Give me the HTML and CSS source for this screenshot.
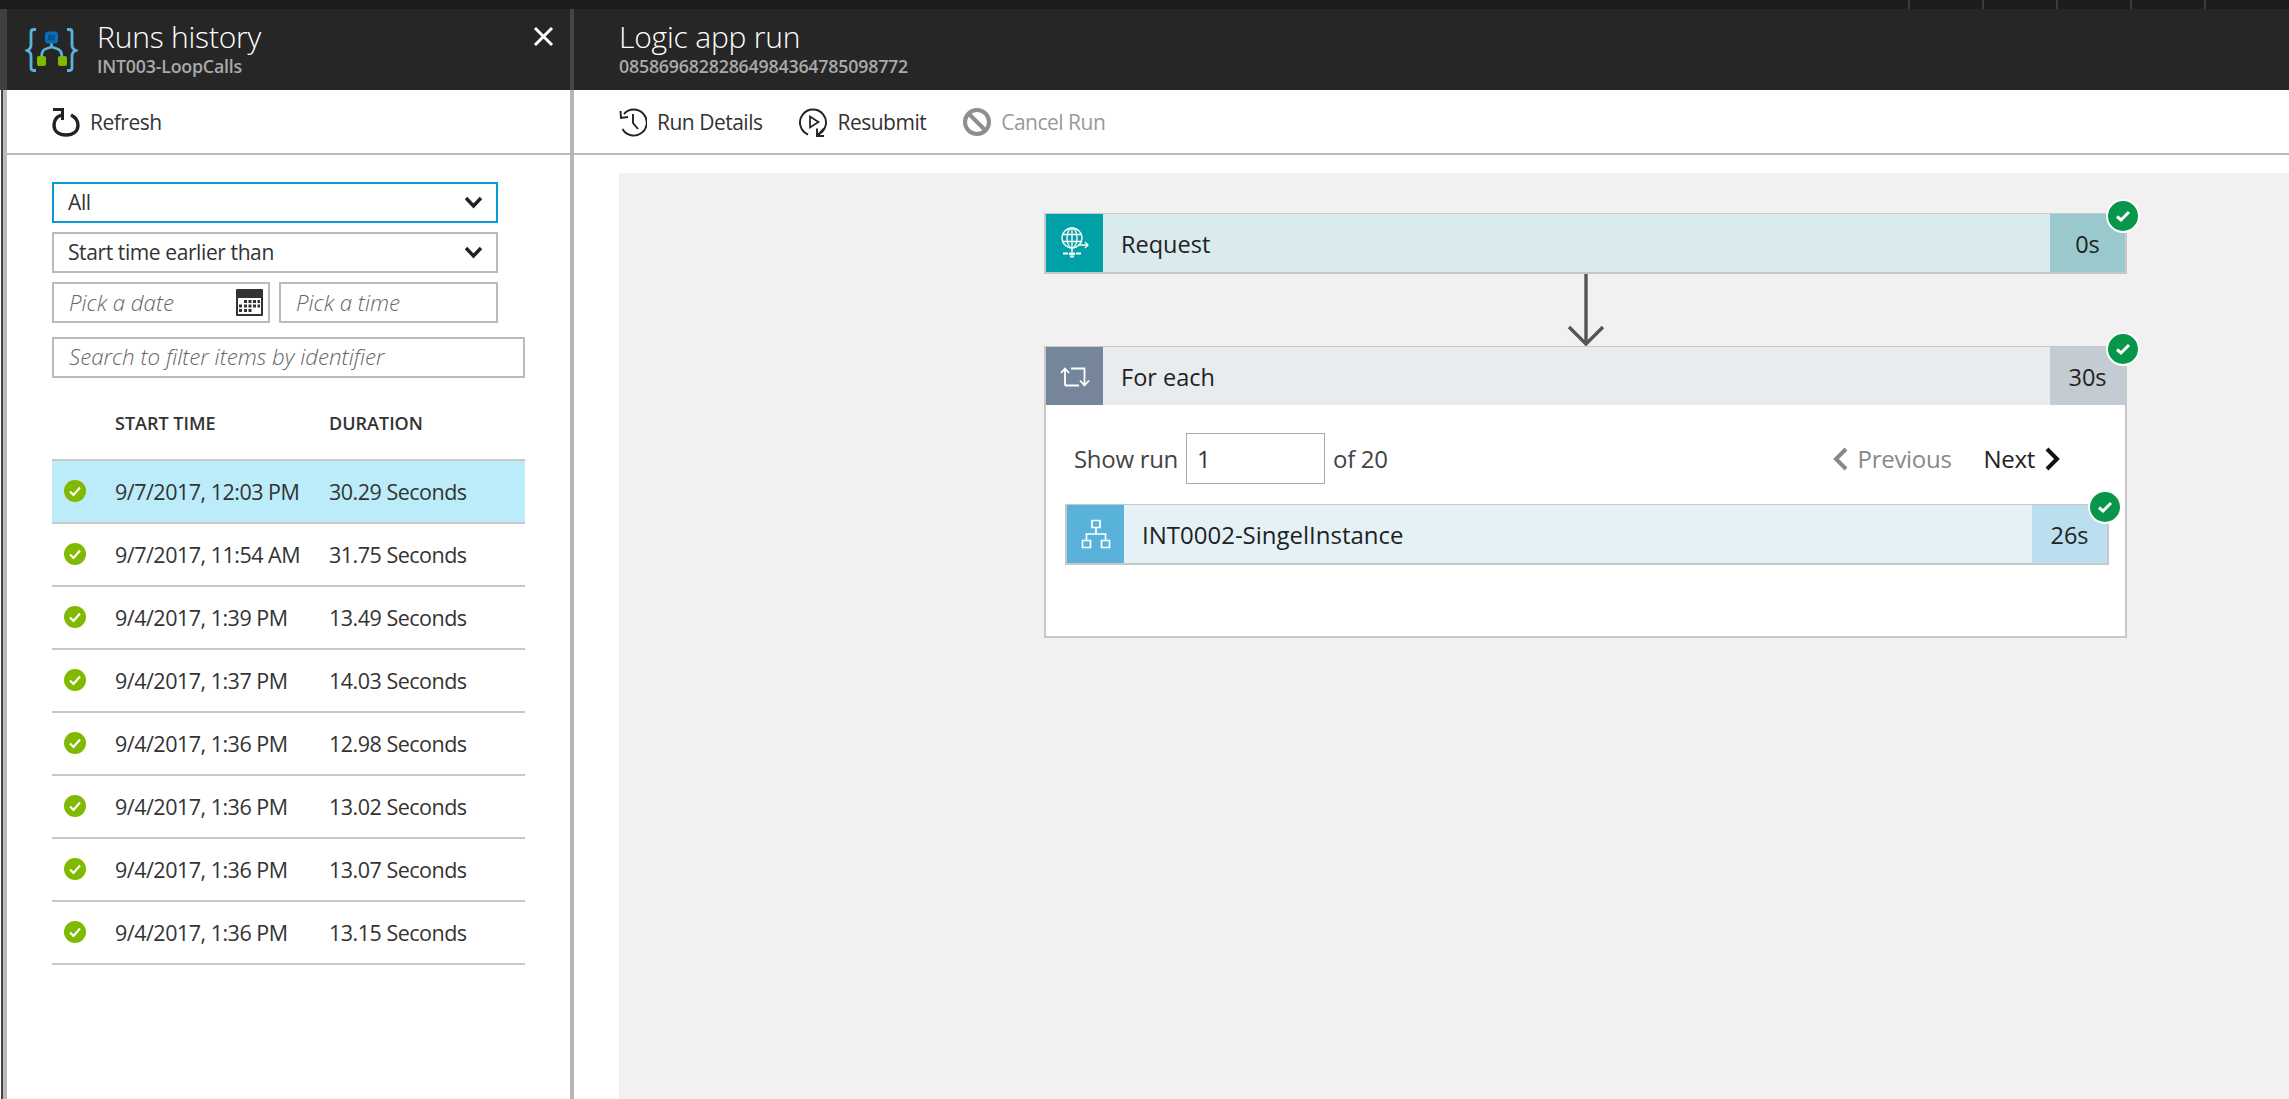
FILE: index.html
```html
<!DOCTYPE html>
<html lang="en">
<head>
    <meta charset="UTF-8">
    <title>Logic app run</title>
    <link rel="stylesheet" href="styles.css">
</head>
<body>

    <div class="topbar">
        <span class="topbar-tab"></span>
        <span class="topbar-tab"></span>
        <span class="topbar-tab"></span>
        <span class="topbar-tab"></span>
        <span class="topbar-tab"></span>
    </div>

    <div class="main">
        <div class="edge"></div>

        <!-- Runs history blade -->
        <section class="blade blade-left">
            <header class="blade-header">
                <svg class="logo" width="53" height="44" viewBox="0 0 53 44">
                    <path d="M11 1.500H8.500C6.500 1.500 6 2.500 6 4.500V17C6 19.500 5 21.500 2 22.500C5 23.500 6 25.500 6 28V39.500C6 41.500 6.500 42.500 8.500 42.500H11" fill="none" stroke="#59b4d9" stroke-width="2.800"/>
                    <path d="M42 1.500H44.500C46.500 1.500 47 2.500 47 4.500V17C47 19.500 48 21.500 51 22.500C48 23.500 47 25.500 47 28V39.500C47 41.500 46.500 42.500 44.500 42.500H42" fill="none" stroke="#59b4d9" stroke-width="2.800"/>
                    <path d="M26.500 13V19M26.500 19C22 20.500 16.500 20 16.500 29M26.500 19C31 20.500 37 20 37 29" fill="none" stroke="#59b4d9" stroke-width="2.600"/>
                    <rect x="21.500" y="5" width="10" height="9" rx="2" fill="#12507f" stroke="#0072c6" stroke-width="3"/>
                    <rect x="12" y="28" width="9" height="10" rx="2" fill="#7fba00"/>
                    <rect x="33" y="28" width="9" height="10" rx="2" fill="#7fba00"/>
                </svg>
                <div class="blade-title">
                    <h1>Runs history</h1>
                    <p>INT003-LoopCalls</p>
                </div>
                <svg class="close" width="21" height="21" viewBox="0 0 21 21">
                    <path d="M2 2L19 19M19 2L2 19" stroke="#fff" stroke-width="3"/>
                </svg>
            </header>
            <div class="commands commands-left">
                <button class="command">
                    <svg width="28" height="30" viewBox="0 0 28 30">
                        <path d="M9 8C4.500 10 2 13.500 2 18C2 24.500 7 28 14 28C21 28 26 24.500 26 18C26 13.500 23 10 19 8" fill="none" stroke="#222" stroke-width="3.400"/>
                        <path d="M1 1H12V13L9 13V4H1Z" fill="#222"/>
                    </svg>
                    Refresh
                </button>
            </div>

            <div class="filters">
                <div class="field field-focus">All <svg class="chev" width="19" height="13" viewBox="0 0 19 13"><path d="M2 2L9.500 10L17 2" fill="none" stroke="#222" stroke-width="3.400"/></svg></div>
                <div class="field">Start time earlier than <svg class="chev" width="19" height="13" viewBox="0 0 19 13"><path d="M2 2L9.500 10L17 2" fill="none" stroke="#222" stroke-width="3.400"/></svg></div>
                <div class="field-pair">
                    <div class="field field-date placeholder">Pick a date
                        <svg class="calendar" width="27" height="27" viewBox="0 0 27 27">
                            <rect width="27" height="27" rx="1" fill="#333"/>
                            <rect x="2" y="9" width="23" height="16" fill="#fff"/>
                            <path d="M8 11h3v3H8zM12.500 11h3v3h-3zM17 11h3v3h-3zM21.500 11h2.500v3h-2.500zM3 15.500h3v3H3zM8 15.500h3v3H8zM12.500 15.500h3v3h-3zM17 15.500h3v3h-3zM21.500 15.500h2.500v3h-2.500zM3 20h3v3H3zM8 20h3v3H8zM12.500 20h3v3h-3z" fill="#333"/>
                        </svg>
                    </div>
                    <div class="field field-time placeholder">Pick a time</div>
                </div>
                <div class="field field-search placeholder">Search to filter items by identifier</div>
            </div>

            <table class="runs">
                <thead>
                    <tr>
                        <th class="col-status"></th>
                        <th class="col-time">START TIME</th>
                        <th>DURATION</th>
                    </tr>
                </thead>
                <tbody id="runRows"></tbody>
            </table>
        </section>

        <div class="divider"></div>

        <!-- Logic app run blade -->
        <section class="blade blade-right">
            <header class="blade-header">
                <div class="blade-title">
                    <h1>Logic app run</h1>
                    <p>08586968282864984364785098772</p>
                </div>
            </header>
            <div class="commands">
                <button class="command">
                    <svg width="28" height="30" viewBox="0 0 28 30">
                        <path d="M5 7A13 13 0 1 1 3.500 22" fill="none" stroke="#222" stroke-width="1.900"/>
                        <path d="M1.500 4L2 11L9 10" fill="none" stroke="#222" stroke-width="1.900"/>
                        <path d="M14 7V16L19 22" fill="none" stroke="#222" stroke-width="1.900"/>
                    </svg>
                    Run Details
                </button>
                <button class="command">
                    <svg width="28" height="30" viewBox="0 0 28 30">
                        <path d="M9 27.500A13 13 0 1 1 19 27.500" fill="none" stroke="#222" stroke-width="1.900"/>
                        <path d="M11 9.500L19.500 15L11 20.500Z" fill="none" stroke="#222" stroke-width="1.700"/>
                        <path d="M25 21.500L18 29M18 21.500V29H25" fill="none" stroke="#222" stroke-width="1.900"/>
                    </svg>
                    Resubmit
                </button>
                <button class="command command-disabled">
                    <svg width="28" height="30" viewBox="0 0 28 30">
                        <circle cx="14" cy="15" r="12" fill="none" stroke="#8e8e8e" stroke-width="4"/>
                        <path d="M5.500 6.500L22.500 23.500" stroke="#8e8e8e" stroke-width="4"/>
                    </svg>
                    Cancel Run
                </button>
            </div>

            <div class="canvas">
                <div class="card card-request">
                    <div class="card-row">
                        <div class="card-icon">
                            <svg width="30" height="32" viewBox="0 0 30 32">
                                <g fill="none" stroke="#fff" stroke-width="1.300">
                                    <circle cx="12" cy="11" r="10"/>
                                    <ellipse cx="12" cy="11" rx="5" ry="10"/>
                                    <path d="M2.500 7.500H21.500M2.500 14.500H21.500M12 1V21"/>
                                    <path d="M18 18H28M25 15L28 18L25 21"/>
                                    <path d="M12 21V26"/>
                                </g>
                                <path d="M3 25.500h5v2H3zM9 25.500h6v2.500H9zM16 25.500h5v2h-5zM10 28.500h4v2h-4z" fill="#fff"/>
                            </svg>
                        </div>
                        <div class="card-name">Request</div>
                        <div class="card-time">0s</div>
                    </div>
                    <span class="badge"><svg width="16" height="14" viewBox="0 0 16 14"><path d="M2 7.500L6 11L14 3" fill="none" stroke="#fff" stroke-width="3"/></svg></span>
                </div>

                <svg class="arrow" width="40" height="72" viewBox="0 0 40 72">
                    <path d="M20 0V69M3 53L20 70L37 53" fill="none" stroke="#555" stroke-width="3.400"/>
                </svg>

                <div class="card card-loop">
                    <div class="card-row">
                        <div class="card-icon">
                            <svg width="30" height="22" viewBox="0 0 30 22">
                                <path d="M5 20.500V4M1 8L5 3.500L9 8M11 3.500H24.500V20M5 20.500H19M20 15.500L24.500 20.500L29 15.500" fill="none" stroke="#fff" stroke-width="1.800"/>
                            </svg>
                        </div>
                        <div class="card-name">For each</div>
                        <div class="card-time">30s</div>
                    </div>
                    <span class="badge"><svg width="16" height="14" viewBox="0 0 16 14"><path d="M2 7.500L6 11L14 3" fill="none" stroke="#fff" stroke-width="3"/></svg></span>
                    <div class="loop-body">
                        <div class="pager">
                            <span>Show run</span>
                            <span class="pager-input">1</span>
                            <span>of 20</span>
                            <span class="pager-nav pager-prev">
                                <svg width="16" height="24" viewBox="0 0 16 24"><path d="M13 2L3 12L13 22" fill="none" stroke="#888" stroke-width="4"/></svg>
                                Previous
                            </span>
                            <span class="pager-nav pager-next">
                                Next
                                <svg width="16" height="24" viewBox="0 0 16 24"><path d="M3 2L13 12L3 22" fill="none" stroke="#111" stroke-width="4"/></svg>
                            </span>
                        </div>
                        <div class="card card-workflow">
                            <div class="card-row">
                                <div class="card-icon">
                                    <svg width="30" height="30" viewBox="0 0 30 30">
                                        <path d="M11 1.500h8v7h-8zM1.500 21.500h8v7h-8zM20.500 21.500h8v7h-8zM15 8.500V15M5.500 21.500V15H24.500V21.500" fill="none" stroke="#fff" stroke-width="1.700"/>
                                    </svg>
                                </div>
                                <div class="card-name">INT0002-SingelInstance</div>
                                <div class="card-time">26s</div>
                            </div>
                            <span class="badge"><svg width="16" height="14" viewBox="0 0 16 14"><path d="M2 7.500L6 11L14 3" fill="none" stroke="#fff" stroke-width="3"/></svg></span>
                        </div>
                    </div>
                </div>
            </div>
        </section>
    </div>

    <script>
        const runs = [
            ['9/7/2017, 12:03 PM', '30.29 Seconds'],
            ['9/7/2017, 11:54 AM', '31.75 Seconds'],
            ['9/4/2017, 1:39 PM', '13.49 Seconds'],
            ['9/4/2017, 1:37 PM', '14.03 Seconds'],
            ['9/4/2017, 1:36 PM', '12.98 Seconds'],
            ['9/4/2017, 1:36 PM', '13.02 Seconds'],
            ['9/4/2017, 1:36 PM', '13.07 Seconds'],
            ['9/4/2017, 1:36 PM', '13.15 Seconds']
        ];
        const tableBody = document.getElementById('runRows');
        runs.forEach((run, i) => {
            const row = document.createElement('tr');
            if (i === 0) row.className = 'selected';
            row.innerHTML = `
                <td class="col-status">
                    <svg width="22" height="22" viewBox="0 0 22 22">
                        <circle cx="11" cy="11" r="11" fill="#7fba00"/>
                        <path d="M6 11.500L9.500 15L16 7.500" fill="none" stroke="#fff" stroke-width="2.200"/>
                    </svg>
                </td>
                <td class="col-time">${run[0]}</td>
                <td>${run[1]}</td>
            `;
            tableBody.appendChild(row);
        });
    </script>

</body>
</html>
```

FILE: styles.css
```css
* {
    box-sizing: border-box;
}
html, body {
    height: 100%;
}
body {
    margin: 0;
    height: 1099px;
    overflow: hidden;
    display: flex;
    flex-direction: column;
    background: #fff;
    font-family: "Open Sans", "Noto Sans", sans-serif;
    color: #333;
}

/* top strip */
.topbar {
    height: 9px;
    background: #1c1c1c;
    display: flex;
    justify-content: flex-end;
    padding-right: 83px;
    gap: 72px;
}
.topbar-tab {
    width: 2px;
    background: #3c3c3c;
}

.main {
    flex: 1;
    display: flex;
    min-height: 0;
}
.edge {
    width: 7px;
    flex-shrink: 0;
    background:
        linear-gradient(#404040 81px, transparent 81px),
        linear-gradient(90deg, #fff 1px, #444 1px, #444 3px, #bbb 3px);
}
.divider {
    width: 4px;
    flex-shrink: 0;
    background: linear-gradient(#464646 81px, #b5b5b5 81px);
}
.blade {
    display: flex;
    flex-direction: column;
}
.blade-left {
    width: 563px;
    flex-shrink: 0;
}
.blade-right {
    flex: 1;
    min-width: 0;
}

/* header */
.blade-header {
    height: 81px;
    background: #262626;
    display: flex;
    align-items: flex-start;
    flex-shrink: 0;
}
.logo {
    margin: 19px 0 0 18px;
}
.blade-title {
    margin-left: 19px;
    padding-top: 8px;
}
.blade-right .blade-title {
    margin-left: 45px;
}
.blade-title h1 {
    margin: 0;
    font-size: 30px;
    line-height: 40px;
    font-weight: 300;
    color: #fff;
    letter-spacing: -0.2px;
}
.blade-title p {
    margin: 0;
    font-size: 17.800px;
    line-height: 19px;
    font-weight: 600;
    color: #aaa;
    letter-spacing: -0.2px;
}
.close {
    margin: 17px 16px 0 auto;
}

/* command bar */
.commands {
    height: 65px;
    flex-shrink: 0;
    border-bottom: 2px solid #bbb;
    display: flex;
    align-items: center;
    gap: 37px;
    padding: 0 0 0 45px;
}
.command {
    display: flex;
    align-items: center;
    gap: 10px;
    padding: 0;
    border: none;
    background: none;
    font: inherit;
    font-size: 21px;
    font-weight: 400;
    letter-spacing: -0.5px;
    color: #333;
}
.command-disabled {
    color: #999;
}

/* filters */
.filters {
    padding: 27px 0 0 45px;
    display: flex;
    flex-direction: column;
    gap: 9px;
}
.field {
    width: 446px;
    height: 41px;
    border: 2px solid #bbb;
    padding: 0 0 1px 14px;
    display: flex;
    align-items: center;
    font-size: 21px;
    letter-spacing: -0.4px;
    color: #333;
}
.field-focus {
    border-color: #0a9bd6;
}
.field-pair {
    display: flex;
    gap: 9px;
}
.field-pair .field-date {
    width: 218px;
    padding-bottom: 0;
}
.field-pair .field-time {
    width: 219px;
    padding-bottom: 0;
}
.field-search {
    width: 473px;
    margin-top: 5px;
}
.placeholder {
    font-style: italic;
    color: #666;
    font-weight: 300;
    font-size: 22.300px;
    letter-spacing: 0;
    padding: 0 0 2px 15px;
}
.chev {
    margin-left: auto;
    margin-right: 13px;
}
.calendar {
    margin-left: auto;
    margin-right: 5px;
}

/* runs table */
.runs {
    margin: 0 0 0 45px;
    width: 473px;
    border-collapse: collapse;
    table-layout: fixed;
}
.runs th {
    height: 82px;
    padding: 9px 0 0 0;
    text-align: left;
    font-size: 18px;
    font-weight: 600;
    color: #333;
}
.runs thead tr {
    border-bottom: 2px solid #c8c8c8;
}
.runs td {
    height: 63px;
    padding: 0;
    font-size: 21.500px;
    font-weight: 400;
    letter-spacing: -0.5px;
    color: #333;
}
.runs tbody tr {
    border-bottom: 2px solid #c8c8c8;
}
.runs .selected {
    background: #bcecfa;
}
.col-status {
    width: 63px;
}
.runs td.col-status {
    padding-left: 12px;
    padding-top: 4px;
}
.col-time {
    width: 214px;
}

/* designer canvas */
.canvas {
    flex: 1;
    margin: 18px 0 0 45px;
    background: #f1f1f1;
    padding: 40px 0 0 425px;
    display: flex;
    flex-direction: column;
    align-items: flex-start;
}
.card {
    position: relative;
    width: 1083px;
    border: solid #c8c8c8;
    border-width: 1px 2px 2px 2px;
}
.card-row {
    display: flex;
    height: 58px;
}
.card-icon {
    width: 57px;
    display: flex;
    align-items: center;
    justify-content: center;
    flex-shrink: 0;
}
.card-name {
    flex: 1;
    padding: 2px 0 0 18px;
    display: flex;
    align-items: center;
    font-size: 23.500px;
    color: #222;
}
.card-workflow .card-name {
    font-size: 24px;
    padding-top: 0;
}
.card-time {
    width: 75px;
    padding-top: 2px;
    display: flex;
    align-items: center;
    justify-content: center;
    font-size: 23.500px;
    color: #222;
}
.card-request .card-icon { background: #00a1a7; }
.card-request .card-name { background: #d9ebee; }
.card-request .card-time { background: #9ac9cd; }
.card-loop .card-icon { background: #76869a; }
.card-loop .card-name { background: #e8ecef; }
.card-loop .card-time { background: #c4cbd2; }
.card-workflow .card-icon { background: #59b2da; }
.card-workflow .card-name { background: #e4f2f8; }
.card-workflow .card-time { background: #badfef; }

.badge {
    position: absolute;
    top: -15px;
    right: -15px;
    width: 34px;
    height: 34px;
    border-radius: 50%;
    background: #07964a;
    border: 2px solid #fff;
    display: flex;
    align-items: center;
    justify-content: center;
}

.arrow {
    margin: 0 0 0 522px;
    display: block;
}

/* for each body */
.loop-body {
    background: #fff;
    height: 231px;
    padding: 28px 0 0 19px;
}
.pager {
    display: flex;
    align-items: center;
    height: 51px;
    padding-left: 9px;
    font-size: 24px;
    font-weight: 400;
    letter-spacing: -0.3px;
    color: #444;
}
.pager-input {
    width: 139px;
    height: 51px;
    margin: 0 8px;
    border: 1px solid #aaa;
    padding-left: 10px;
    display: flex;
    align-items: center;
    color: #333;
}
.pager-nav {
    display: flex;
    align-items: center;
    gap: 9px;
}
.pager-prev {
    margin-left: auto;
    color: #888;
}
.pager-next {
    margin-left: 32px;
    margin-right: 65px;
    color: #222;
}
.card-workflow {
    width: 1044px;
    margin-top: 20px;
}
```
